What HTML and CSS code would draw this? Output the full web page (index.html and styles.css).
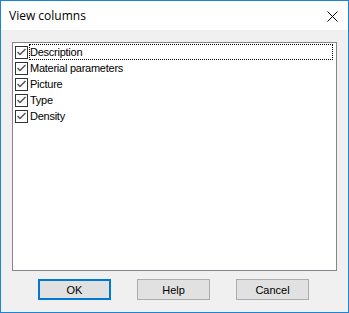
FILE: index.html
```html
<!DOCTYPE html>
<html lang="en">
<head>
    <meta charset="UTF-8">
    <title>View columns</title>
    <link rel="stylesheet" href="styles.css">
</head>
<body>
    <div class="window">
        <div class="titlebar">
            <span class="title">View columns</span>
            <span class="close">
                <svg width="11" height="11" viewBox="0 0 11 11"><path d="M0.5 0.5 L10.5 10.5 M10.5 0.5 L0.5 10.5" stroke="#000" stroke-width="1" fill="none"/></svg>
            </span>
        </div>
        <div class="content">
            <div class="list">
                <div class="item">
                    <span class="check"><svg width="11" height="11" viewBox="0 0 11 11"><path d="M1.5 5 L4 7.5 L9.5 2" stroke="#555" stroke-width="1.5" fill="none"/></svg></span>
                    <span class="label focus">Description</span>
                </div>
                <div class="item">
                    <span class="check"><svg width="11" height="11" viewBox="0 0 11 11"><path d="M1.5 5 L4 7.5 L9.5 2" stroke="#555" stroke-width="1.5" fill="none"/></svg></span>
                    <span class="label">Material parameters</span>
                </div>
                <div class="item">
                    <span class="check"><svg width="11" height="11" viewBox="0 0 11 11"><path d="M1.5 5 L4 7.5 L9.5 2" stroke="#555" stroke-width="1.5" fill="none"/></svg></span>
                    <span class="label">Picture</span>
                </div>
                <div class="item">
                    <span class="check"><svg width="11" height="11" viewBox="0 0 11 11"><path d="M1.5 5 L4 7.5 L9.5 2" stroke="#555" stroke-width="1.5" fill="none"/></svg></span>
                    <span class="label">Type</span>
                </div>
                <div class="item">
                    <span class="check"><svg width="11" height="11" viewBox="0 0 11 11"><path d="M1.5 5 L4 7.5 L9.5 2" stroke="#555" stroke-width="1.5" fill="none"/></svg></span>
                    <span class="label">Density</span>
                </div>
            </div>
            <div class="buttons">
                <button class="default">OK</button>
                <button>Help</button>
                <button>Cancel</button>
            </div>
        </div>
    </div>
</body>
</html>
```

FILE: styles.css
```css
body {
    margin: 0;
    padding: 0;
    font-family: 'Liberation Sans', Arial, sans-serif;
}

.window {
    box-sizing: border-box;
    width: 349px;
    height: 313px;
    border: 1px solid #1c84d6;
    display: flex;
    flex-direction: column;
    background: #f0f0f0;
}

.titlebar {
    height: 29px;
    background: #ffffff;
    display: flex;
    align-items: center;
    justify-content: space-between;
    padding: 0 10px 0 8px;
}

.title {
    font-family: 'Open Sans', 'Noto Sans', sans-serif;
    font-size: 12px;
    color: #000;
}

.close {
    display: flex;
    margin-top: 1px;
}

.content {
    flex: 1;
    padding: 12px 11px 0 11px;
}

.list {
    box-sizing: border-box;
    height: 229px;
    border: 1px solid #828790;
    background: #ffffff;
    padding-top: 1px;
}

.item {
    display: flex;
    align-items: center;
    height: 16px;
    padding-left: 2px;
}

.check {
    box-sizing: border-box;
    width: 13px;
    height: 13px;
    border: 1px solid #333;
    background: #fff;
    display: flex;
    align-items: center;
    justify-content: center;
}

.label {
    font-size: 11px;
    letter-spacing: -0.25px;
    color: #000;
    margin-left: 1px;
    padding: 0 1px 0 0;
    line-height: 14px;
    border: 1px solid transparent;
}

.label.focus {
    flex: 1;
    margin-right: 3px;
    border: 1px dotted #000;
}

.buttons {
    display: flex;
    gap: 26px;
    padding-left: 26px;
    margin-top: 8px;
}

button {
    box-sizing: border-box;
    width: 73px;
    height: 21px;
    background: #e1e1e1;
    border: 1px solid #adadad;
    font-family: 'Liberation Sans', Arial, sans-serif;
    font-size: 11px;
    color: #000;
    padding: 0;
}

button.default {
    border: 2px solid #0078d7;
}
```
